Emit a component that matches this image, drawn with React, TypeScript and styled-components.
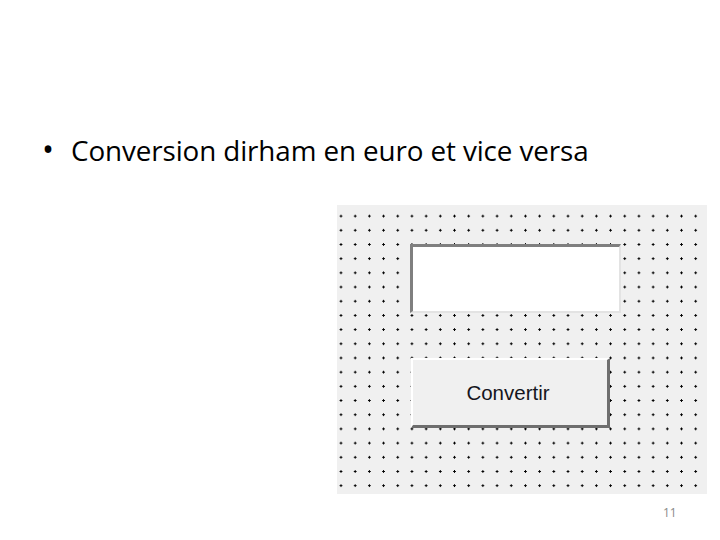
import styled, { createGlobalStyle } from "styled-components";

const GlobalStyle = createGlobalStyle`
    html, body {
        margin: 0;
        padding: 0;
        background: #ffffff;
    }
`;

const App = () => {
    return (
        <>
            <GlobalStyle />
            <Slide>
                <Bullet>
                    <Dot>•</Dot>
                    <BulletText>Conversion dirham en euro et vice versa</BulletText>
                </Bullet>
                <FormDesigner>
                    <TextInput />
                    <ConvertButton>Convertir</ConvertButton>
                </FormDesigner>
                <PageNumber>11</PageNumber>
            </Slide>
        </>
    );
};

export default App;

const Slide = styled.div`
    width: 720px;
    height: 540px;
    overflow: hidden;
    background: #ffffff;
    display: flex;
    flex-direction: column;
    font-family: "Open Sans", "Noto Sans", sans-serif;
`;

const Bullet = styled.div`
    display: flex;
    align-items: baseline;
    margin-top: 130px;
    padding-left: 42px;
    height: 38px;
    color: #000000;
`;

const Dot = styled.span`
    width: 29px;
    font-size: 32px;
    line-height: 38px;
`;

const BulletText = styled.span`
    font-size: 27.8px;
    line-height: 38px;
    letter-spacing: -0.1px;
`;

/* designer surface with the snap grid dots */
const FormDesigner = styled.div`
    margin-top: 37px;
    margin-left: 337px;
    width: 370px;
    height: 289px;
    box-sizing: border-box;
    padding: 39px 0 0 73px;
    display: flex;
    flex-direction: column;
    align-items: flex-start;
    gap: 45px;
    background-color: #f0f0f0;
    background-image: radial-gradient(circle, #000000 1px, transparent 1.3px);
    background-size: 14.2px 14.2px;
    background-position: -3.1px 4px;
`;

const TextInput = styled.div`
    width: 211px;
    height: 69px;
    box-sizing: border-box;
    background: #ffffff;
    border-top: 3px solid #7f7f7f;
    border-left: 3px solid #7f7f7f;
    border-right: 2px solid #e3e3e3;
    border-bottom: 2px solid #e3e3e3;
`;

const ConvertButton = styled.div`
    width: 199px;
    height: 70px;
    margin-left: 1px;
    box-sizing: border-box;
    background: #f0f0f0;
    border-top: 2px solid #ffffff;
    border-left: 2px solid #ffffff;
    border-right: 3px solid #6e6e6e;
    border-bottom: 3px solid #6e6e6e;
    display: flex;
    align-items: center;
    justify-content: center;
    padding-right: 4px;
    font-family: "Liberation Sans", Arial, sans-serif;
    font-size: 20.5px;
    color: #151520;
`;

const PageNumber = styled.div`
    margin-top: 10px;
    padding-left: 663px;
    font-family: "Open Sans", sans-serif;
    font-size: 12px;
    color: #8a8a8a;
`;
